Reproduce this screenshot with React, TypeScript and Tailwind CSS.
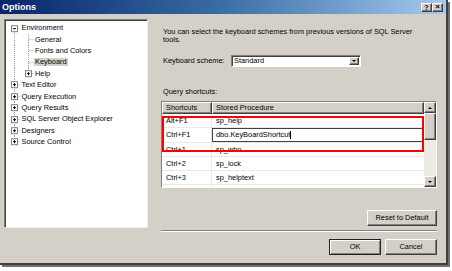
import React from 'react';

const font = { fontFamily: '"Liberation Sans", Tahoma, sans-serif' };
const ROW = 11.4;

type Node = { label: string; level: 0 | 1; expander?: boolean; open?: boolean; selected?: boolean; first?: boolean; last?: boolean; lastChild?: boolean };

const nodes: Node[] = [
  { label: 'Environment', level: 0, expander: true, open: true, first: true },
  { label: 'General', level: 1 },
  { label: 'Fonts and Colors', level: 1 },
  { label: 'Keyboard', level: 1, selected: true },
  { label: 'Help', level: 1, expander: true, lastChild: true },
  { label: 'Text Editor', level: 0, expander: true },
  { label: 'Query Execution', level: 0, expander: true },
  { label: 'Query Results', level: 0, expander: true },
  { label: 'SQL Server Object Explorer', level: 0, expander: true },
  { label: 'Designers', level: 0, expander: true },
  { label: 'Source Control', level: 0, expander: true, last: true },
];

const Box = ({ cx, cy, open }: { cx: number; cy: number; open?: boolean }) => (
  <g>
    <rect x={cx - 3} y={cy - 3} width={6} height={6} fill="#fff" stroke="#808080" strokeWidth={1} />
    <line x1={cx - 1.5} y1={cy} x2={cx + 1.5} y2={cy} stroke="#000" strokeWidth={1} />
    {!open && <line x1={cx} y1={cy - 1.5} x2={cx} y2={cy + 1.5} stroke="#000" strokeWidth={1} />}
  </g>
);

// tree connector lines, x positions are inside the tree's client area
const X0 = 9.5;
const X1 = 23.5;

const TreeRow = ({ n }: { n: Node }) => {
  const mid = ROW / 2;
  const w = n.level === 0 ? 15.5 : 29;
  const dot = { stroke: '#a0a0a0', strokeWidth: 1, strokeDasharray: '1 1' };
  return (
    <div className="flex items-center" style={{ height: ROW }}>
      <svg width={w} height={ROW} className="shrink-0">
        <line x1={X0} y1={n.first ? mid : 0} x2={X0} y2={n.last ? mid : ROW} {...dot} />
        {n.level === 0 && <line x1={X0} y1={mid} x2={w} y2={mid} {...dot} />}
        {n.level === 1 && (
          <>
            <line x1={X1} y1={0} x2={X1} y2={n.lastChild ? mid : ROW} {...dot} />
            <line x1={X1} y1={mid} x2={w} y2={mid} {...dot} />
          </>
        )}
        {n.expander && n.level === 0 && <Box cx={X0} cy={mid} open={n.open} />}
        {n.expander && n.level === 1 && <Box cx={X1} cy={mid} open={n.open} />}
      </svg>
      <span className={`whitespace-nowrap px-[1px] leading-[8px] ${n.selected ? 'bg-[#d4d0c8]' : ''}`}>{n.label}</span>
    </div>
  );
};

const raised = 'bg-[#d4d0c8] border border-t-white border-l-white border-b-[#404040] border-r-[#404040] shadow-[inset_-1px_-1px_0_#808080]';

const Btn = ({ children, w, def }: { children: React.ReactNode; w: string; def?: boolean }) => (
  <div className={`${w} h-[16px] flex items-center justify-center whitespace-nowrap ${def ? 'bg-[#d4d0c8] border border-[#202020] shadow-[inset_1px_1px_0_#fff,inset_-1px_-1px_0_#808080]' : raised}`}>
    {children}
  </div>
);

const rows = [
  ['Alt+F1', 'sp_help'],
  ['Ctrl+F1', 'dbo.KeyBoardShortcut'],
  ['Ctrl+1', 'sp_who'],
  ['Ctrl+2', 'sp_lock'],
  ['Ctrl+3', 'sp_helptext'],
  ['', ''],
];

export default function App() {
  return (
    <div className="w-[452px] h-[271px] bg-white text-[7.4px] text-black overflow-hidden" style={font}>
      <div className="w-[448px] h-[265px] flex flex-col bg-[#d4d0c8] border-r-2 border-b-2 border-r-[#404040] border-b-[#404040] shadow-[2px_2px_0_#707070]">
        {/* title bar */}
        <div className="h-[14px] shrink-0 flex items-center justify-between pl-[2px] pr-[3px] bg-gradient-to-r from-[#0a246a] via-[#3a6ea5] to-[#a6caf0]">
          <span className="text-white font-bold text-[9px] leading-none">Options</span>
          <div className="flex">
            <div className={`w-[11px] h-[9px] ${raised} flex items-center justify-center text-[7px] font-bold leading-none`}>?</div>
            <div className={`w-[11px] h-[9px] ${raised} flex items-center justify-center text-[8px] font-bold leading-none`}>×</div>
          </div>
        </div>

        <div className="flex pl-[4px] pt-[5px] pr-[9px] gap-[13px]">
          {/* tree */}
          <div className="w-[144px] h-[209px] shrink-0 bg-white border border-t-[#808080] border-l-[#808080] border-b-[#f0f0f0] border-r-[#f0f0f0] shadow-[inset_1px_1px_0_#404040] pt-[2.5px] overflow-hidden">
            {nodes.map((n) => (
              <TreeRow key={n.label} n={n} />
            ))}
          </div>

          {/* right pane */}
          <div className="w-[276px] flex flex-col">
            <div className="mt-[8.75px] pl-[2px] leading-[8.5px]">
              <div className="whitespace-nowrap">You can select the keyboard schemes from previous versions of SQL Server</div>
              <div>tools.</div>
            </div>
            <div className="flex items-center mt-[10px] pl-[2px]">
              <span className="w-[68px] whitespace-nowrap">Keyboard scheme:</span>
              <div className="w-[130px] h-[12px] flex bg-white border border-t-[#808080] border-l-[#808080] border-b-white border-r-white shadow-[inset_1px_1px_0_#404040]">
                <span className="flex-1 pl-[2px] leading-[10px]">Standard</span>
                <div className={`w-[10px] m-px ${raised} flex items-center justify-center`}>
                  <span className="w-0 h-0 border-l-[2.5px] border-r-[2.5px] border-t-[2.5px] border-l-transparent border-r-transparent border-t-black" />
                </div>
              </div>
            </div>
            <div className="mt-[21.5px] pl-[2px] leading-[8.5px]">Query shortcuts:</div>
            <div className="relative mt-[4.5px] h-[87px] flex bg-[#d4d0c8] border border-t-[#808080] border-l-[#808080] border-b-white border-r-white overflow-hidden">
              <div className="flex-1 flex flex-col">
                <div className="flex h-[12px] shrink-0">
                  <div className={`w-[50px] pl-[3px] leading-[10px] ${raised}`}>Shortcuts</div>
                  <div className={`flex-1 pl-[3px] leading-[10px] ${raised}`}>Stored Procedure</div>
                </div>
                {rows.map(([k, v], i) => (
                  <div key={i} className="flex h-[14.2px] shrink-0 bg-white border-b border-[#e8e8e8]">
                    <div className="w-[50px] pl-[4px] flex items-center border-r border-[#e8e8e8]">{k}</div>
                    {i === 1 ? (
                      <div className="flex-1 flex items-center pl-[3px] border border-[#404040]">
                        {v}
                        <span className="w-px h-[8px] bg-black" />
                      </div>
                    ) : (
                      <div className="flex-1 flex items-center pl-[4px]">{v}</div>
                    )}
                  </div>
                ))}
              </div>
              {/* scrollbar */}
              <div className="w-[12px] shrink-0 flex flex-col bg-[#ecebe6]">
                <div className={`h-[11px] ${raised} flex items-center justify-center`}>
                  <span className="w-0 h-0 border-l-[2.5px] border-r-[2.5px] border-b-[2.5px] border-l-transparent border-r-transparent border-b-black" />
                </div>
                <div className={`h-[27px] ${raised}`} />
                <div className="flex-1" />
                <div className={`h-[11px] ${raised} flex items-center justify-center`}>
                  <span className="w-0 h-0 border-l-[2.5px] border-r-[2.5px] border-t-[2.5px] border-l-transparent border-r-transparent border-t-black" />
                </div>
              </div>
              {/* red highlight */}
              <div className="absolute left-[0px] top-[13.5px] w-[262px] h-[36px] border-2 border-[#ff0000]" />
            </div>
            <div className="flex justify-end mt-[21.5px]">
              <Btn w="w-[70px]">Reset to Default</Btn>
            </div>
            <div className="mt-[4px] h-[2px] border-t border-t-[#808080] border-b border-b-white" />
            <div className="flex justify-end gap-[4px] mt-[7px]">
              <Btn w="w-[52px]" def>OK</Btn>
              <Btn w="w-[52px]">Cancel</Btn>
            </div>
          </div>
        </div>
      </div>
    </div>
  );
}
